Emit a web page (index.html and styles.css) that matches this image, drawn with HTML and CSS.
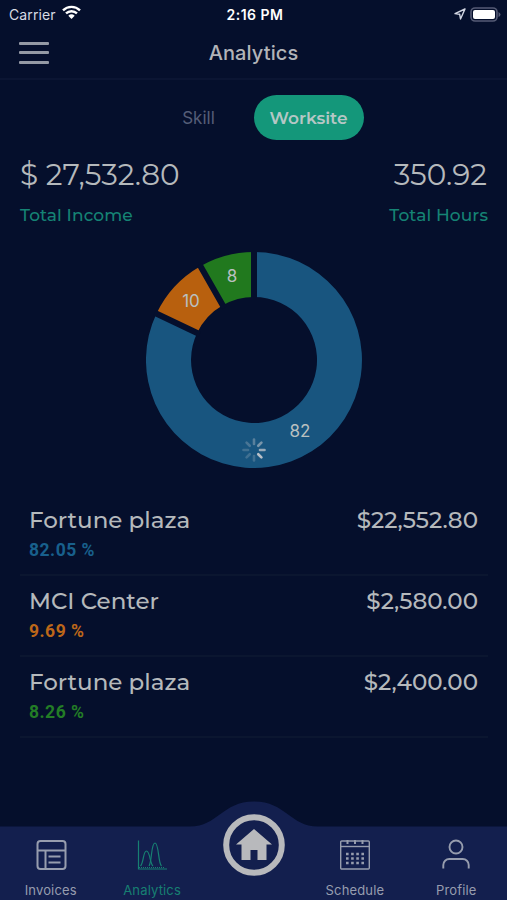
FILE: index.html
```html
<!DOCTYPE html>
<html lang="en">
<head>
    <meta charset="UTF-8">
    <meta name="viewport" content="width=device-width, initial-scale=1.0">
    <title>Analytics</title>
    <link rel="stylesheet" href="styles.css">
</head>
<body>
    <div class="app">
        <div class="status-bar">
            <div class="carrier">
                <span>Carrier</span>
                <svg width="19" height="15" viewBox="0 0 19 15">
                    <path d="M1 5.3a12.2 12.2 0 0 1 17 0M4 8.4a8 8 0 0 1 11 0" fill="none" stroke="#fff" stroke-width="2.4"/>
                    <path d="M6.3 10.8a4.7 4.7 0 0 1 6.4 0L9.5 14z" fill="#fff"/>
                </svg>
            </div>
            <div class="time">2:16 PM</div>
            <div class="battery">
                <svg width="12" height="12" viewBox="0 0 12 12">
                    <path d="M11 1L1 5.6l4.7.7.8 4.7z" fill="none" stroke="#d4d8e4" stroke-width="1.4" stroke-linejoin="round"/>
                </svg>
                <svg width="31" height="15" viewBox="0 0 31 15">
                    <rect x="1" y="1" width="26" height="13" rx="4" fill="none" stroke="#555b75" stroke-width="1.6"/>
                    <rect x="3" y="3" width="22" height="9" rx="2" fill="#fff"/>
                    <path d="M28.5 5v5q2-1 2-2.5t-2-2.5z" fill="#555b75"/>
                </svg>
            </div>
        </div>

        <header class="header">
            <div class="menu">
                <span></span>
                <span></span>
                <span></span>
            </div>
            <h1>Analytics</h1>
        </header>

        <main class="content">
            <div class="tabs">
                <button class="tab">Skill</button>
                <button class="tab active">Worksite</button>
            </div>

            <div class="totals">
                <div class="total">
                    <div class="total-value">$ 27,532.80</div>
                    <div class="total-label">Total Income</div>
                </div>
                <div class="total right">
                    <div class="total-value">350.92</div>
                    <div class="total-label">Total Hours</div>
                </div>
            </div>

            <svg class="chart" width="216" height="216" viewBox="-108 -108 216 216">
                <path d="M0-108A108 108 0 1 1-97.6-46.3L-56.9-27A63 63 0 1 0 0-63z" fill="#18557f"/>
                <path d="M-97.6-46.3A108 108 0 0 1-53.6-93.8L-31.3-54.7A63 63 0 0 0-56.9-27z" fill="#b8600e"/>
                <path d="M-53.6-93.8A108 108 0 0 1 0-108V-63A63 63 0 0 0-31.3-54.7z" fill="#21791e"/>
                <!-- gaps between slices -->
                <path class="chart-gaps" d="M0-60v-50M-54.2-25.7L-99.4-47.2M-29.7-52.1L-54.5-95.6"/>
                <g class="chart-labels">
                    <text x="46" y="77">82</text>
                    <text x="-63" y="-53">10</text>
                    <text x="-22" y="-78">8</text>
                </g>
                <!-- spinner -->
                <g transform="translate(0 90)" stroke="#b9c0c8" stroke-width="2.6" stroke-linecap="round">
                    <path d="M0-6v-4.5" opacity=".4"/>
                    <path d="M0-6v-4.5" opacity=".6" transform="rotate(45)"/>
                    <path d="M0-6v-4.5" opacity=".8" transform="rotate(90)"/>
                    <path d="M0-6v-4.5" transform="rotate(135)"/>
                    <path d="M0-6v-4.5" opacity=".25" transform="rotate(180)"/>
                    <path d="M0-6v-4.5" opacity=".25" transform="rotate(225)"/>
                    <path d="M0-6v-4.5" opacity=".25" transform="rotate(270)"/>
                    <path d="M0-6v-4.5" opacity=".3" transform="rotate(315)"/>
                </g>
            </svg>

            <ul class="worksites">
                <li>
                    <div class="row">
                        <span>Fortune plaza</span>
                        <span>$22,552.80</span>
                    </div>
                    <div class="percent blue">82.05 %</div>
                </li>
                <li>
                    <div class="row">
                        <span>MCI Center</span>
                        <span>$2,580.00</span>
                    </div>
                    <div class="percent orange">9.69 %</div>
                </li>
                <li>
                    <div class="row">
                        <span>Fortune plaza</span>
                        <span>$2,400.00</span>
                    </div>
                    <div class="percent green">8.26 %</div>
                </li>
            </ul>
        </main>

        <nav class="nav">
            <svg class="nav-bg" width="507" height="100" viewBox="0 0 507 100" fill="#131f4e">
                <path d="M0 26.5H190C218 26.5 222 1.5 254 1.5S290 26.5 318 26.5H507V100H0z"/>
            </svg>
            <a class="nav-item">
                <svg width="32" height="32" viewBox="0 0 32 32" fill="none" stroke="currentColor" stroke-width="2">
                    <rect x="2.5" y="2" width="28" height="28" rx="3"/>
                    <path d="M2.5 11.5h28M10.500 11.500v18.500M13.500 17.500h12M13.500 23.500h12"/>
                </svg>
                <span>Invoices</span>
            </a>
            <a class="nav-item active">
                <svg width="32" height="32" viewBox="0 0 32 32" fill="none" stroke="currentColor" stroke-width="1.2">
                    <path d="M2.5 1.5v28.500h28.500"/>
                    <path d="M3 28.5h25" stroke-dasharray="1 1"/>
                    <path d="M4.5 27C8 23 7 12 10.500 12S14 25 17 27"/>
                    <path d="M13 27C16 23 15 4 19 4S22 24 25.500 27"/>
                </svg>
                <span>Analytics</span>
            </a>
            <a class="nav-item home">
                <svg width="62" height="62" viewBox="0 0 62 62">
                    <circle cx="31" cy="31" r="27.8" fill="none" stroke="#b8b9bc" stroke-width="6"/>
                    <path d="M31 15L49 30.5H43.5V46H34.5V36H27.5V46H18.5V30.5H13z" fill="#b8b9bc"/>
                </svg>
            </a>
            <a class="nav-item">
                <svg width="32" height="32" viewBox="0 0 32 32" fill="none" stroke="currentColor" stroke-width="1.4">
                    <rect x="1.7" y="2" width="28.6" height="28" rx="1"/>
                    <path d="M2 7.5h28"/>
                    <path d="M8.5 1v4M16 1v4M23.5 1v4" stroke-width="2"/>
                    <path d="M7 15h18M7 19.5h18M7 24h18" stroke-width="2.6" stroke-dasharray="2.6 2.53"/>
                </svg>
                <span>Schedule</span>
            </a>
            <a class="nav-item">
                <svg width="32" height="32" viewBox="0 0 32 32" fill="none" stroke="currentColor" stroke-width="1.9">
                    <circle cx="16" cy="8" r="6.5"/>
                    <path d="M3.3 29.5v-3.5a6 6 0 0 1 6-6h13.4a6 6 0 0 1 6 6v3.5"/>
                </svg>
                <span>Profile</span>
            </a>
        </nav>
    </div>
</body>
</html>
```
FILE: styles.css
```css
* {
    box-sizing: border-box;
}
body {
    margin: 0;
    background: #050f2c;
    color: #b5b9bc;
    font-family: Montserrat, Inter, sans-serif;
}
.app {
    display: flex;
    flex-direction: column;
    width: 507px;
    height: 900px;
    overflow: hidden;
}
.status-bar {
    display: grid;
    grid-template-columns: 1fr auto 1fr;
    align-items: center;
    height: 28px;
    padding: 0 6px 0 9px;
    font-family: Inter, sans-serif;
    font-size: 14px;
    color: #d8dbe4;
}
.carrier {
    display: flex;
    align-items: center;
    gap: 6px;
    letter-spacing: 0.1px;
}
.carrier svg {
    margin-top: -3px;
}
.time {
    color: #fff;
    font-weight: 600;
    letter-spacing: 0.5px;
}
.battery {
    display: flex;
    justify-content: flex-end;
    align-items: center;
    gap: 4px;
}
.header {
    display: grid;
    grid-template-columns: 1fr auto 1fr;
    align-items: center;
    height: 52px;
    padding: 0 19px;
    border-bottom: 2px solid #0b1533;
    font-family: Inter, sans-serif;
}
.menu {
    display: flex;
    flex-direction: column;
    gap: 6.5px;
    width: 30px;
    margin-top: -1px;
}
.menu span {
    height: 3px;
    border-radius: 1px;
    background: #9499a5;
}
.header h1 {
    margin: 0;
    font-size: 20px;
    font-weight: 500;
    line-height: 48px;
    letter-spacing: 0.1px;
    color: #b2b4b9;
}
.content {
    flex: 1;
    padding: 15px 20px 0;
}
.tabs {
    display: flex;
    justify-content: center;
}
.tab {
    width: 110px;
    height: 45px;
    padding: 0;
    border: none;
    border-radius: 23px;
    background: none;
    font-family: Inter, sans-serif;
    font-size: 17px;
    color: #555d77;
}
.tab.active {
    background: #14977a;
    color: #b5c7c5;
    font-family: Montserrat, Inter, sans-serif;
    font-weight: 600;
}
.totals {
    display: flex;
    justify-content: space-between;
    height: 112px;
    padding-top: 14px;
}
.total.right {
    margin-right: -1px;
    text-align: right;
}
.total-value {
    font-size: 29.5px;
    line-height: 41px;
}
.total.right .total-value {
    padding-right: 1px;
}
.total-label {
    margin-top: 10px;
    font-size: 17px;
    font-weight: 500;
    line-height: 20px;
    letter-spacing: 0.1px;
    color: #158374;
}
.chart {
    display: block;
    margin: 0 auto;
}
.chart-gaps {
    stroke: #050f2c;
    stroke-width: 6;
}
.chart-labels {
    fill: #b9c0c0;
    font-family: Inter, sans-serif;
    font-size: 17px;
    text-anchor: middle;
}
.worksites {
    margin: 27px -1px 0 0;
    padding: 0;
    list-style: none;
}
.worksites li {
    height: 81px;
    padding: 8px 10px 0 9px;
    border-bottom: 2px solid #0b1630;
}
.row {
    display: flex;
    justify-content: space-between;
    font-size: 23px;
    font-weight: 500;
    line-height: 34px;
}
.percent {
    margin-top: 3px;
    font-family: Roboto, sans-serif;
    font-size: 17.5px;
    font-weight: 700;
    line-height: 20px;
    letter-spacing: 0.5px;
}
.blue {
    color: #18608c;
}
.orange {
    color: #bd6719;
}
.green {
    color: #237d26;
}
.nav {
    position: relative;
    display: flex;
    height: 100px;
    font-family: Inter, sans-serif;
}
.nav-bg {
    position: absolute;
    left: 0;
    top: 0;
}
.nav-item {
    position: relative;
    display: flex;
    flex: 1;
    flex-direction: column;
    align-items: center;
    padding-top: 39px;
    font-size: 13px;
    line-height: 16px;
    letter-spacing: 0.15px;
    color: #979dae;
}
.nav-item span {
    margin-top: 11px;
}
.nav-item.active {
    color: #178072;
}
.nav-item.home {
    padding-top: 14px;
}
```
